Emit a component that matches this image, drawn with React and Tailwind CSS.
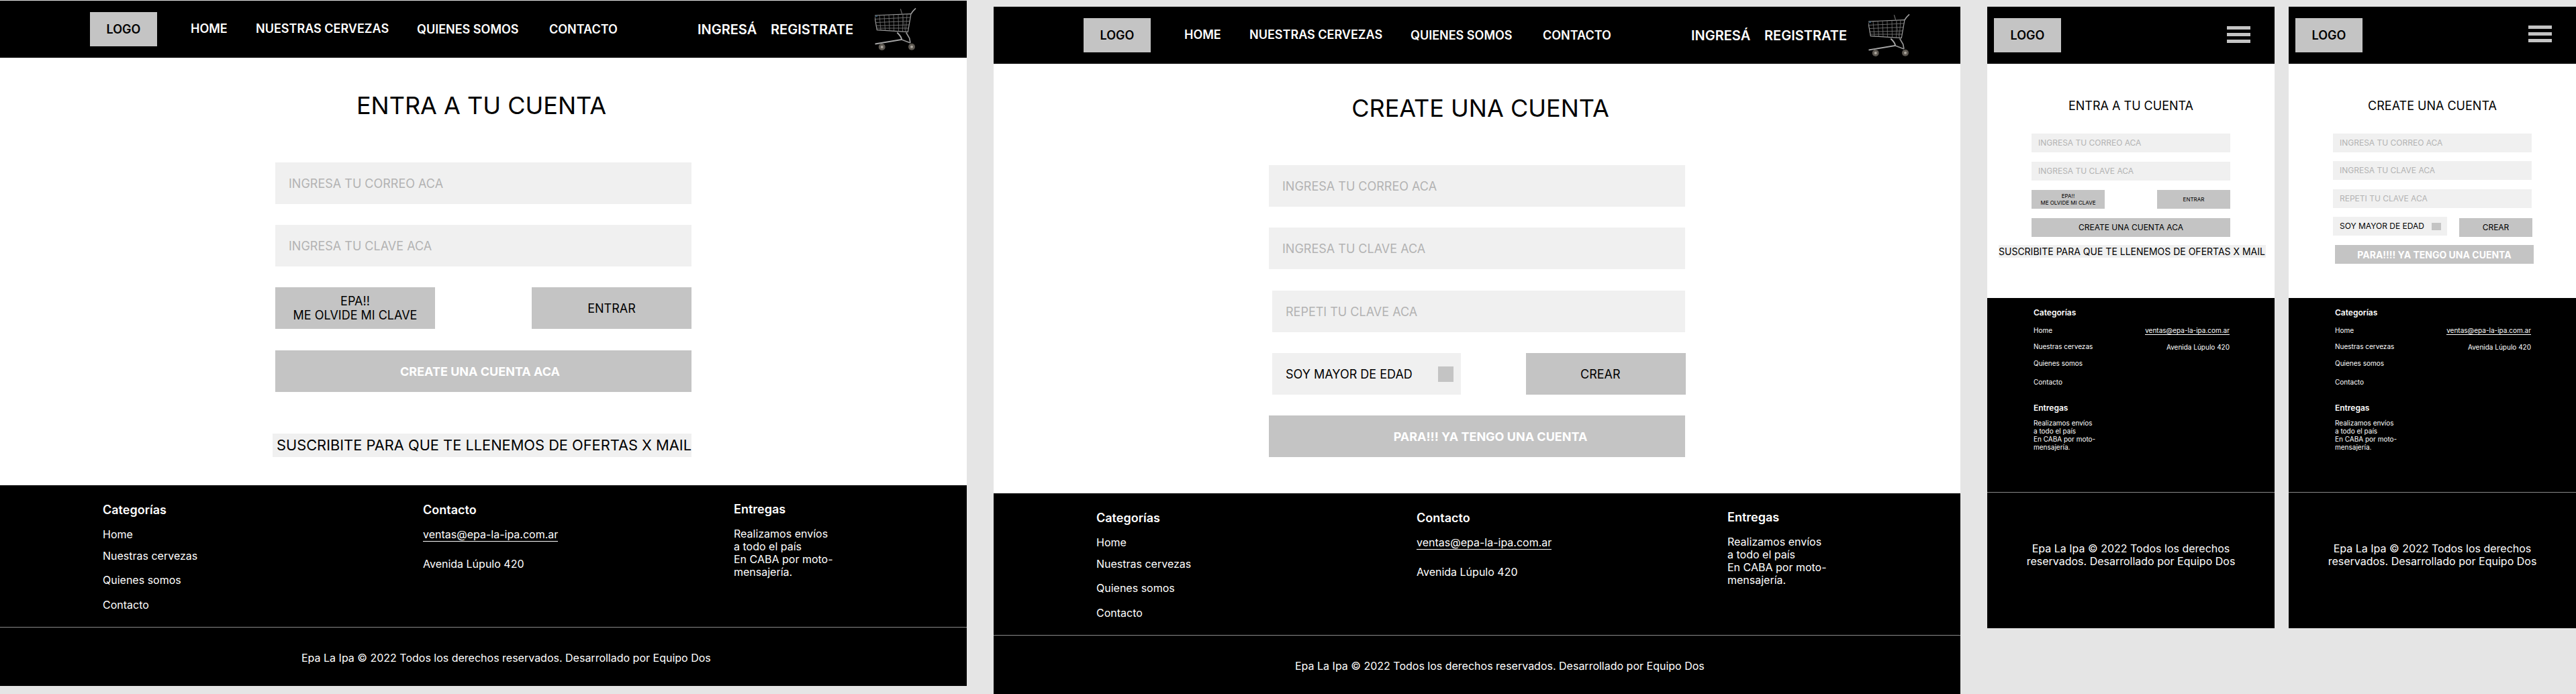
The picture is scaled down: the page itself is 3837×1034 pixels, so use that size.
import React from 'react';

const Cart = () => (
  <svg width="64" height="66" viewBox="0 0 64 66" fill="none" className="shrink-0">
    {/* basket */}
    <path d="M-0.5 12 L54 9.7 L49.3 36.5 L3.3 33.7 Z" stroke="#9c9c9c" strokeWidth="1.2" />
    <path d="M0.5 17.5 L53 15 M1 22.5 L52 20.5 M1.5 27.5 L51 26 M2.5 31 L50 31" stroke="#858585" strokeWidth="0.8" />
    <path d="M7 12 L9 34 M14 11.5 L15.5 34.5 M21 11 L22 35 M28 11 L28.5 35.5 M35 10.5 L35.5 35.5 M42 10 L41.5 36 M48 10 L46 36" stroke="#777" strokeWidth="0.8" />
    <path d="M1 13 L4 13" stroke="#3a5a70" strokeWidth="2" />
    {/* handle and back pole */}
    <path d="M54 9.7 C56 6 58 4 61 1.3" stroke="#a0a0a0" strokeWidth="1.6" />
    <path d="M38.3 2.3 L40.7 10" stroke="#666" strokeWidth="1.2" />
    <path d="M41.5 12 L45 34" stroke="#555" strokeWidth="0.8" />
    {/* under frame */}
    <path d="M33.3 37.5 C37 41 40 44 40 48 L0.5 54.5" stroke="#a8a8a8" strokeWidth="1.8" />
    <path d="M40 48 L53 53 M46.7 37.5 L51.7 46 L53 53" stroke="#959595" strokeWidth="1.7" />
    <path d="M9 53 L10 57" stroke="#8a8a8a" strokeWidth="1.4" />
    {/* wheels */}
    <circle cx="10.7" cy="59" r="5" fill="#5c5750" />
    <circle cx="10.7" cy="59" r="2" fill="#aaa59d" />
    <circle cx="55" cy="58.7" r="5" fill="#5c5750" />
    <circle cx="55" cy="58.7" r="2" fill="#aaa59d" />
  </svg>
);

const Logo = () => (
  <div className="w-[100px] h-[51px] bg-[#c4c4c4] flex items-center justify-center text-[18px] font-semibold text-black shrink-0">
    LOGO
  </div>
);

const DesktopHeader = () => (
  <header className="h-[85px] bg-black flex items-center pl-[134px] text-white font-semibold">
    <Logo />
    <span className="ml-[50px] w-[97px] -mt-[2px] text-[18px]">HOME</span>
    <span className="w-[240px] -mt-[2px] text-[18px] whitespace-nowrap">NUESTRAS CERVEZAS</span>
    <span className="w-[197px] text-[18px] whitespace-nowrap">QUIENES SOMOS</span>
    <span className="w-[221px] text-[18px]">CONTACTO</span>
    <span className="w-[109px] text-[20px]">INGRESÁ</span>
    <span className="w-[155px] text-[20px]">REGISTRATE</span>
    <Cart />
  </header>
);

const DesktopFooter = () => (
  <footer className="h-[299px] bg-black text-white">
    <div className="h-[211px] flex pl-[153px] text-[16px] leading-5">
      <div className="w-[477px] pt-[25px]">
        <h4 className="text-[18px] leading-6 font-semibold">Categorías</h4>
        <p className="mt-[14px]">Home</p>
        <p className="mt-3">Nuestras cervezas</p>
        <p className="mt-4">Quienes somos</p>
        <p className="mt-[17px]">Contacto</p>
      </div>
      <div className="w-[463px] pt-[25px]">
        <h4 className="text-[18px] leading-6 font-semibold">Contacto</h4>
        <p className="mt-[14px]">
          <span className="inline-block h-[21px] border-b border-white">ventas@epa-la-ipa.com.ar</span>
        </p>
        <p className="mt-[23px]">Avenida Lúpulo 420</p>
      </div>
      <div className="pt-6">
        <h4 className="text-[18px] leading-6 font-semibold">Entregas</h4>
        <p className="mt-[15px] leading-[19px]">
          Realizamos envíos<br />a todo el país<br />En CABA por moto-<br />mensajería.
        </p>
      </div>
    </div>
    <div className="border-t border-[#8a8a8a] pl-[449px] pt-[35px] text-[16px] leading-5">
      Epa La Ipa © 2022 Todos los derechos reservados. Desarrollado por Equipo Dos
    </div>
  </footer>
);

const Field = ({ children, className = '' }) => (
  <div className={`bg-[#f0f0f0] text-[#b3b3b3] flex items-center ${className}`}>{children}</div>
);

const LoginDesktop = () => (
  <section className="w-[1440px] mt-px shrink-0 bg-white">
    <DesktopHeader />
    <main className="h-[637px] pt-[49px] text-[18px]">
      <h1 className="w-[1434px] text-center text-[36px] leading-11 text-black">ENTRA A TU CUENTA</h1>
      <div className="w-[620px] ml-[410px] mt-[63px]">
        <Field className="h-[62px] pl-5">INGRESA TU CORREO ACA</Field>
        <Field className="h-[62px] pl-5 mt-[31px]">INGRESA TU CLAVE ACA</Field>
        <div className="flex justify-between mt-[31px] text-black">
          <div className="w-[238px] h-[62px] bg-[#c4c4c4] flex items-center justify-center text-center leading-[21px]">
            <span>EPA!!<br />ME OLVIDE MI CLAVE</span>
          </div>
          <div className="w-[238px] h-[62px] bg-[#c4c4c4] flex items-center justify-center">ENTRAR</div>
        </div>
        <div className="h-[62px] mt-8 bg-[#c4c4c4] flex items-center justify-center pr-[10px] text-white font-bold">
          CREATE UNA CUENTA ACA
        </div>
      </div>
      <div className="w-[624px] h-[35px] ml-[406px] mt-[62px] bg-[#f0f0f0] flex items-center pl-[6px] whitespace-nowrap text-[21.8px] text-black">
        SUSCRIBITE PARA QUE TE LLENEMOS DE OFERTAS X MAIL
      </div>
    </main>
    <DesktopFooter />
  </section>
);

const RegisterDesktop = () => (
  <section className="w-[1440px] mt-[10px] ml-10 shrink-0 bg-white">
    <DesktopHeader />
    <main className="h-[640px] pt-11 text-[18px]">
      <h1 className="w-[1450px] text-center text-[36px] leading-11 text-black">CREATE UNA CUENTA</h1>
      <div className="w-[620px] ml-[410px] mt-[63px]">
        <Field className="h-[62px] pl-5">INGRESA TU CORREO ACA</Field>
        <Field className="h-[62px] pl-5 mt-[31px]">INGRESA TU CLAVE ACA</Field>
        <Field className="h-[62px] pl-5 mt-8 ml-[5px]">REPETI TU CLAVE ACA</Field>
        <div className="flex justify-between mt-[31px] ml-[5px] text-black">
          <div className="w-[281px] h-[62px] bg-[#f0f0f0] flex items-center pl-5">
            SOY MAYOR DE EDAD
            <span className="w-[23px] h-[23px] ml-[38px] bg-[#c4c4c4]" />
          </div>
          <div className="w-[238px] h-[62px] -mr-px bg-[#c4c4c4] flex items-center pl-[81px]">CREAR</div>
        </div>
        <div className="h-[62px] mt-[31px] bg-[#c4c4c4] flex items-center justify-center pl-10 text-white font-bold">
          PARA!!! YA TENGO UNA CUENTA
        </div>
      </div>
    </main>
    <DesktopFooter />
  </section>
);

const MobileHeader = ({ barsClass }) => (
  <header className="h-[85px] bg-black flex items-center pl-[10px]">
    <Logo />
    <div className={`ml-[247px] w-[35px] flex flex-col gap-[5px] ${barsClass}`}>
      <span className="h-[5px] bg-[#c4c4c4]" />
      <span className="h-[5px] bg-[#c4c4c4]" />
      <span className="h-[5px] bg-[#c4c4c4]" />
    </div>
  </header>
);

const MobileFooter = () => (
  <footer className="h-[492px] bg-black text-white text-[10px]">
    <div className="h-[289px] flex justify-between pl-[69px] pr-[67px] leading-4">
      <div className="pt-[14px]">
        <h4 className="text-[12px] font-semibold">Categorías</h4>
        <p className="mt-[10px]">Home</p>
        <p className="mt-2">Nuestras cervezas</p>
        <p className="mt-[9px]">Quienes somos</p>
        <p className="mt-3">Contacto</p>
        <h4 className="mt-[23px] text-[12px] font-semibold">Entregas</h4>
        <p className="mt-2 leading-3">
          Realizamos envíos<br />a todo el país<br />En CABA por moto-<br />mensajería.
        </p>
      </div>
      <div className="pt-10 text-right">
        <p><span className="inline-block h-[15px] border-b border-white">ventas@epa-la-ipa.com.ar</span></p>
        <p className="mt-[9px]">Avenida Lúpulo 420</p>
      </div>
    </div>
    <div className="border-t border-[#8a8a8a] pt-[74px] text-center text-[16px] leading-[19px]">
      Epa La Ipa © 2022 Todos los derechos<br />reservados. Desarrollado por Equipo Dos
    </div>
  </footer>
);

const LoginMobile = () => (
  <section className="w-[428px] mt-[10px] ml-10 shrink-0 bg-white">
    <MobileHeader barsClass="-mt-[3px]" />
    <main className="h-[349px] pt-[52px] text-[12px]">
      <h1 className="text-center text-[18px] leading-[22px] text-black">ENTRA A TU CUENTA</h1>
      <div className="w-[296px] ml-[66px] mt-[30px]">
        <Field className="h-7 pl-[10px]">INGRESA TU CORREO ACA</Field>
        <Field className="h-7 pl-[10px] mt-[14px]">INGRESA TU CLAVE ACA</Field>
        <div className="flex justify-between mt-[14px] text-[8px] text-black">
          <div className="w-[109px] h-7 bg-[#c4c4c4] flex items-center justify-center text-center leading-[10px]">
            <span>EPA!!<br />ME OLVIDE MI CLAVE</span>
          </div>
          <div className="w-[109px] h-7 bg-[#c4c4c4] flex items-center justify-center">ENTRAR</div>
        </div>
        <div className="h-7 mt-[14px] bg-[#c4c4c4] flex items-center justify-center text-black">CREATE UNA CUENTA ACA</div>
      </div>
      <div className="w-[398px] h-[19px] ml-[17px] mt-3 bg-[#f0f0f0] flex items-center whitespace-nowrap text-[14px] text-black">
        SUSCRIBITE PARA QUE TE LLENEMOS DE OFERTAS X MAIL
      </div>
    </main>
    <MobileFooter />
  </section>
);

const RegisterMobile = () => (
  <section className="w-[428px] mt-[10px] ml-[21px] shrink-0 bg-white">
    <MobileHeader barsClass="-mt-[5px]" />
    <main className="h-[349px] pt-[52px] text-[12px]">
      <h1 className="text-center text-[18px] leading-[22px] text-black">CREATE UNA CUENTA</h1>
      <div className="w-[296px] ml-[66px] mt-[30px]">
        <Field className="h-7 pl-[10px]">INGRESA TU CORREO ACA</Field>
        <Field className="h-7 pl-[10px] mt-[13px]">INGRESA TU CLAVE ACA</Field>
        <Field className="h-7 pl-[10px] mt-[14px]">REPETI TU CLAVE ACA</Field>
        <div className="flex justify-between items-start mt-[13px] text-black">
          <div className="w-[170px] h-7 bg-[#f0f0f0] flex items-center pl-[10px]">
            SOY MAYOR DE EDAD
            <span className="w-[14px] h-[11px] ml-[11px] bg-[#c4c4c4]" />
          </div>
          <div className="w-[109px] h-7 -mr-px mt-[2px] bg-[#c4c4c4] flex items-center justify-center">CREAR</div>
        </div>
        <div className="w-[296px] h-7 ml-[3px] mt-3 bg-[#c4c4c4] flex items-center justify-center text-[14px] font-bold text-white">
          PARA!!!! YA TENGO UNA CUENTA
        </div>
      </div>
    </main>
    <MobileFooter />
  </section>
);

export default function App() {
  return (
    <div className="w-[3837px] h-[1034px] overflow-hidden bg-[#e5e5e5] flex items-start font-['Inter',sans-serif]">
      <LoginDesktop />
      <RegisterDesktop />
      <LoginMobile />
      <RegisterMobile />
    </div>
  );
}
